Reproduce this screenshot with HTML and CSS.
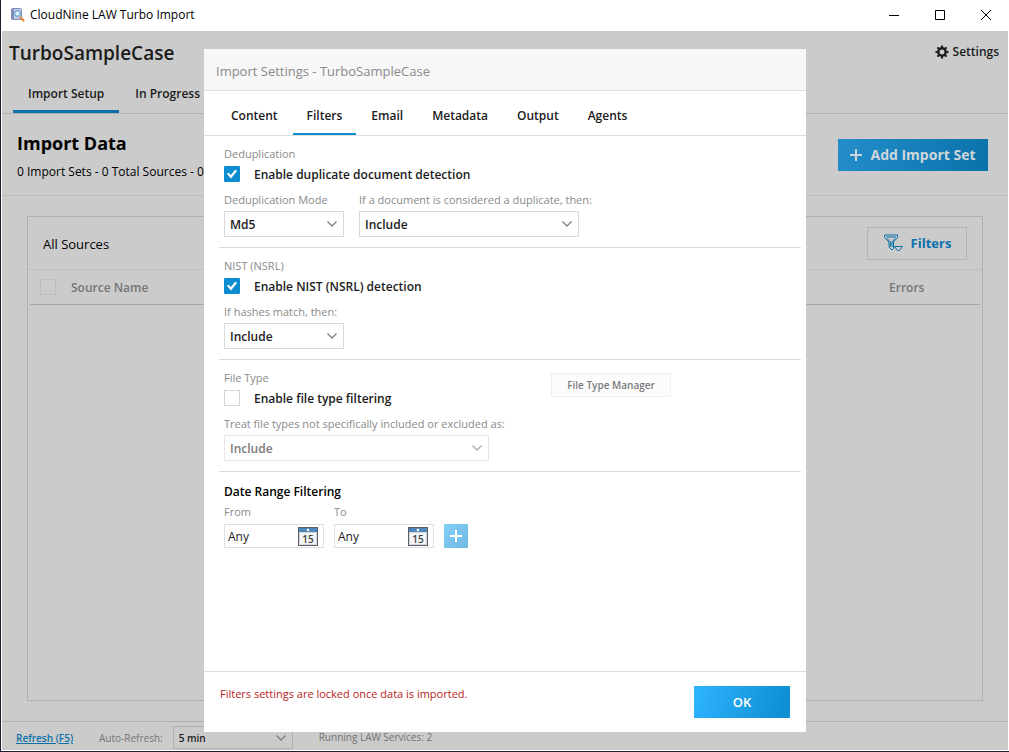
FILE: index.html
```html
<!DOCTYPE html>
<html lang="en">
<head>
<meta charset="utf-8">
<title>CloudNine LAW Turbo Import</title>
<link rel="stylesheet" href="styles.css">
</head>
<body>
<div class="window">
  <header class="titlebar">
    <svg class="app-icon" viewBox="0 0 14 14" aria-hidden="true">
      <rect x="0.5" y="0.5" width="10" height="11" rx="1" fill="#c3cbe6" stroke="#7f8cb8"/>
      <rect x="1" y="1" width="2" height="10" fill="#7f8dbd"/>
      <circle cx="6.500" cy="5.500" r="2.800" fill="#d9f1fd" stroke="#4a93bd" stroke-width="1"/>
      <path d="M9.500 9.500l3 3" stroke="#e08a3c" stroke-width="2.200" stroke-linecap="round"/>
    </svg>
    <span class="app-name">CloudNine LAW Turbo Import</span>
    <div class="window-buttons">
      <button class="window-button" aria-label="Minimize"><svg viewBox="0 0 12 12"><path d="M1 6.500h10"/></svg></button>
      <button class="window-button" aria-label="Maximize"><svg viewBox="0 0 12 12"><path d="M1.500 1.500h9v9h-9z"/></svg></button>
      <button class="window-button" aria-label="Close"><svg viewBox="0 0 12 12"><path d="M1 1l10 10M11 1L1 11"/></svg></button>
    </div>
  </header>

  <div class="workspace">
    <div class="case-header">
      <div class="case-top">
        <h1 class="case-name">TurboSampleCase</h1>
        <button class="settings">
          <svg viewBox="0 0 14 14" aria-hidden="true">
            <circle cx="7" cy="7" r="3.700" fill="none" stroke="currentColor" stroke-width="2.400"/>
            <path d="M7 0.500v2M7 11.500v2M0.500 7h2M11.500 7h2M2.400 2.400l1.400 1.400M10.200 10.200l1.400 1.400M11.600 2.400l-1.400 1.400M3.800 10.200l-1.400 1.400" stroke="currentColor" stroke-width="2"/>
          </svg>
          Settings
        </button>
      </div>
      <nav class="tabs">
        <button class="tab tab-active">Import Setup</button>
        <button class="tab">In Progress</button>
      </nav>
    </div>

    <div class="import-bar">
      <div>
        <h2 class="import-title">Import Data</h2>
        <p class="import-counts">0 Import Sets - 0 Total Sources - 0.00 KB</p>
      </div>
      <button class="add-set">
        <svg viewBox="0 0 12 12" aria-hidden="true"><path d="M6 0v12M0 6h12"/></svg>
        Add Import Set
      </button>
    </div>

    <main class="content">
      <section class="sources">
        <div class="sources-bar">
          <h3 class="sources-title">All Sources</h3>
          <button class="filters">
            <svg viewBox="0 0 20 18" aria-hidden="true">
              <path d="M1.500 1h13v2.500L10.500 8v6.500L9 16l-3-3V8L1.500 3.500zM3 3h10M4 4.500l3.500 3.500v4.500M12 4.500L9 8v5"/>
              <path d="M11.500 12.500h8l-3 4h-2z"/>
            </svg>
            Filters
          </button>
        </div>
        <table class="source-table">
          <thead>
            <tr>
              <th class="col-check"><input class="check check-muted" type="checkbox" aria-label="Select all sources"></th>
              <th class="col-name">Source Name</th>
              <th class="col-errors">Errors</th>
            </tr>
          </thead>
        </table>
      </section>
    </main>

    <footer class="statusbar">
      <a class="refresh" href="#">Refresh (F5)</a>
      <label class="auto-label" for="auto-refresh">Auto-Refresh:</label>
      <div class="picker picker-status">
        <select id="auto-refresh"><option>5 min</option></select>
        <svg class="chevron" viewBox="0 0 10 6" aria-hidden="true"><path d="M0.500 0.500L5 5l4.500-4.500"/></svg>
      </div>
      <span class="services">Running LAW Services: 2</span>
    </footer>

    <div class="overlay">
      <div class="dialog" role="dialog" aria-labelledby="dialog-title">
        <h2 class="dialog-title" id="dialog-title">Import Settings - TurboSampleCase</h2>
        <nav class="dialog-tabs">
          <button class="dialog-tab">Content</button>
          <button class="dialog-tab dialog-tab-active">Filters</button>
          <button class="dialog-tab">Email</button>
          <button class="dialog-tab">Metadata</button>
          <button class="dialog-tab">Output</button>
          <button class="dialog-tab">Agents</button>
        </nav>

        <div class="dialog-body">
          <section class="group">
            <div class="caption">Deduplication</div>
            <label class="option"><input class="check" type="checkbox" checked><span class="option-text">Enable duplicate document detection</span></label>
            <div class="fields">
              <div class="field">
                <label class="caption" for="dedupe-mode">Deduplication Mode</label>
                <div class="picker picker-small">
                  <select id="dedupe-mode"><option>Md5</option></select>
                  <svg class="chevron" viewBox="0 0 10 6" aria-hidden="true"><path d="M0.500 0.500L5 5l4.500-4.500"/></svg>
                </div>
              </div>
              <div class="field">
                <label class="caption" for="dedupe-action">If a document is considered a duplicate, then:</label>
                <div class="picker picker-medium">
                  <select id="dedupe-action"><option>Include</option></select>
                  <svg class="chevron" viewBox="0 0 10 6" aria-hidden="true"><path d="M0.500 0.500L5 5l4.500-4.500"/></svg>
                </div>
              </div>
            </div>
          </section>

          <section class="group">
            <div class="caption">NIST (NSRL)</div>
            <label class="option"><input class="check" type="checkbox" checked><span class="option-text">Enable NIST (NSRL) detection</span></label>
            <div class="fields">
              <div class="field">
                <label class="caption" for="nist-action">If hashes match, then:</label>
                <div class="picker picker-small">
                  <select id="nist-action"><option>Include</option></select>
                  <svg class="chevron" viewBox="0 0 10 6" aria-hidden="true"><path d="M0.500 0.500L5 5l4.500-4.500"/></svg>
                </div>
              </div>
            </div>
          </section>

          <section class="group group-split">
            <div class="group-main">
              <div class="caption">File Type</div>
              <label class="option"><input class="check" type="checkbox"><span class="option-text">Enable file type filtering</span></label>
              <div class="fields">
                <div class="field">
                  <label class="caption" for="type-action">Treat file types not specifically included or excluded as:</label>
                  <div class="picker picker-large picker-disabled">
                    <select id="type-action" disabled><option>Include</option></select>
                    <svg class="chevron" viewBox="0 0 10 6" aria-hidden="true"><path d="M0.500 0.500L5 5l4.500-4.500"/></svg>
                  </div>
                </div>
              </div>
            </div>
            <button class="type-manager" disabled>File Type Manager</button>
          </section>

          <section class="group group-dates">
            <h3 class="dates-title">Date Range Filtering</h3>
            <div class="date-row">
              <div class="date-field">
                <label class="caption" for="date-from">From</label>
                <div class="date-box">
                  <input id="date-from" type="text" value="Any">
                  <button class="calendar" aria-label="Pick start date">
                    <svg viewBox="0 0 20 19"><rect x="0.500" y="0.500" width="19" height="18" fill="#d4d7db" stroke="#596069"/><rect x="1" y="1" width="18" height="4" fill="#4f86bb"/><circle cx="10" cy="3" r="1.300" fill="#fff"/><rect x="2" y="6" width="16" height="11" fill="#f4f5f6"/><text x="10" y="16">15</text></svg>
                  </button>
                </div>
              </div>
              <div class="date-field">
                <label class="caption" for="date-to">To</label>
                <div class="date-box">
                  <input id="date-to" type="text" value="Any">
                  <button class="calendar" aria-label="Pick end date">
                    <svg viewBox="0 0 20 19"><rect x="0.500" y="0.500" width="19" height="18" fill="#d4d7db" stroke="#596069"/><rect x="1" y="1" width="18" height="4" fill="#4f86bb"/><circle cx="10" cy="3" r="1.300" fill="#fff"/><rect x="2" y="6" width="16" height="11" fill="#f4f5f6"/><text x="10" y="16">15</text></svg>
                  </button>
                </div>
              </div>
              <button class="add-range" aria-label="Add date range"><svg viewBox="0 0 12 12"><path d="M6 0v12M0 6h12"/></svg></button>
            </div>
          </section>
        </div>

        <div class="dialog-footer">
          <p class="lock-note">Filters settings are locked once data is imported.</p>
          <button class="ok">OK</button>
        </div>
      </div>
    </div>
  </div>
</div>
</body>
</html>
```

FILE: styles.css
```css
* {
  box-sizing: border-box;
}

body {
  margin: 0;
  font-family: "Open Sans", "Noto Sans", sans-serif;
  font-size: 12px;
  line-height: 16px;
  color: #1b1b1b;
}

h1, h2, h3, p {
  margin: 0;
}

button, input, select {
  margin: 0;
  padding: 0;
  border: 0;
  background: none;
  font: inherit;
  color: inherit;
}

svg {
  display: block;
  flex: none;
  fill: none;
}

.window {
  display: flex;
  flex-direction: column;
  min-height: 100vh;
  border: 1px solid #1b2130;
  border-width: 0 0 1px 1px;
  background: #fff;
}

.titlebar {
  display: flex;
  align-items: center;
  height: 31px;
  padding: 0 0 2px 10px;
  color: #000;
}

.app-icon {
  width: 14px;
  height: 14px;
  margin-right: 5px;
}

.window-buttons {
  display: flex;
  margin-left: auto;
}

.window-button {
  display: grid;
  place-items: center;
  width: 46px;
  height: 28px;
}

.window-button svg {
  width: 12px;
  height: 12px;
  stroke: #000;
}

.workspace {
  position: relative;
  display: flex;
  flex: 1;
  flex-direction: column;
  margin: 0 1px 1px;
  background: #cbcbcb;
}

.case-header {
  border-bottom: 1px solid #b0b0b0;
}

.case-top {
  display: flex;
  align-items: center;
  justify-content: space-between;
  padding: 8px 9px 0 7px;
}

.case-name {
  font-size: 19px;
  line-height: 28px;
  font-weight: 550;
}

.settings {
  display: flex;
  align-items: center;
  gap: 4px;
  padding-bottom: 2px;
  font-weight: 550;
}

.settings svg {
  width: 14px;
  height: 14px;
}

.tabs {
  display: flex;
  gap: 1px;
  padding: 8px 11px 0;
}

.tab {
  height: 38px;
  padding: 2px 15px 0;
  border-bottom: 3px solid transparent;
  font-weight: 550;
}

.tab-active {
  border-color: #0b71aa;
}

.import-bar {
  display: flex;
  align-items: center;
  justify-content: space-between;
  height: 82px;
  padding: 0 20px 0 15px;
  border-bottom: 1px solid #bcbcbc;
  color: #000;
}

.import-title {
  font-size: 18px;
  line-height: 26px;
  font-weight: 700;
}

.import-counts {
  margin-top: 8px;
}

.add-set {
  display: flex;
  align-items: center;
  justify-content: center;
  gap: 8px;
  width: 150px;
  height: 32px;
  background: linear-gradient(105deg, #238ecb, #0a72aa);
  color: #cfd6da;
  font-size: 14px;
  font-weight: 700;
}

.add-set svg {
  width: 12px;
  height: 12px;
  stroke: currentColor;
  stroke-width: 2;
}

.content {
  display: flex;
  flex: 1;
  padding: 20px 25px;
}

.sources {
  flex: 1;
  border: 1px solid #b0b0b4;
}

.sources-bar {
  display: flex;
  align-items: center;
  justify-content: space-between;
  height: 53px;
  padding: 0 15px;
  border-bottom: 1px solid #bebebe;
}

.sources-title {
  padding-top: 2px;
  color: #000;
  font-size: 13px;
  font-weight: 400;
}

.filters {
  display: flex;
  align-items: center;
  justify-content: center;
  gap: 8px;
  width: 100px;
  height: 33px;
  border: 1px solid #b3b3b3;
  color: #0b71aa;
  font-size: 13px;
  font-weight: 700;
}

.filters svg {
  width: 20px;
  height: 18px;
  stroke: currentColor;
}

.source-table {
  width: calc(100% - 4px);
  margin: 0 2px;
  border-collapse: collapse;
  border-bottom: 1px solid #a8a8a8;
  color: #757575;
  text-align: left;
}

.source-table th {
  height: 34px;
  padding: 2px 0 0;
  font-weight: 550;
}

.source-table .col-check {
  width: 41px;
  padding: 0 0 0 10px;
}

.col-errors {
  width: 91px;
}

.statusbar {
  display: flex;
  height: 29px;
  padding-left: 14px;
  border-top: 1px solid #b0b0b0;
  color: #757575;
  font-size: 10px;
}

.refresh {
  padding-top: 8px;
  color: #0b71aa;
  font-weight: 550;
}

.auto-label {
  margin: 8px 10px 0 26px;
}

.services {
  margin: 7px 0 0 26px;
}

.overlay {
  position: absolute;
  inset: 0;
  display: flex;
  justify-content: center;
  padding: 18px 0;
}

.dialog {
  display: flex;
  flex-direction: column;
  width: 602px;
  background: #fff;
}

.dialog-title {
  padding: 12px 12px 9px;
  border-bottom: 1px solid #dedede;
  background: #f7f7f7;
  color: #8a8a8a;
  font-size: 13px;
  line-height: 20px;
  font-weight: 400;
}

.dialog-tabs {
  display: flex;
  gap: 1px;
  padding: 0 13px;
  border-bottom: 1px solid #dedede;
}

.dialog-tab {
  height: 44px;
  padding: 8px 14px 0;
  border-bottom: 2px solid transparent;
  font-weight: 550;
}

.dialog-tab-active {
  border-color: #0d8dd0;
}

.dialog-body {
  flex: 1;
  padding: 0 5px 0 15px;
}

.group {
  padding: 10px 5px;
  border-bottom: 1px solid #dcdcdf;
}

.group-split {
  display: flex;
}

.group-main {
  width: 327px;
}

.caption {
  display: block;
  color: #8a8a8a;
  font-size: 11px;
  line-height: 16px;
}

.option {
  display: flex;
  align-items: center;
  gap: 14px;
  height: 24px;
  font-weight: 550;
}

.option-text {
  padding-top: 2px;
}

.check {
  display: grid;
  place-items: center;
  flex: none;
  width: 16px;
  height: 16px;
  border: 1px solid #d5d5d8;
  appearance: none;
}

.check:checked {
  border-color: #0d8dd0;
  border-radius: 1px;
  background: #0d8dd0;
}

.check:checked::before {
  content: "";
  width: 10px;
  height: 9px;
  background: #fff;
  clip-path: polygon(0 50%, 14% 34%, 38% 62%, 84% 0, 100% 16%, 40% 100%);
}

.check-muted {
  border-color: #bdbdbd;
}

.fields {
  display: flex;
  gap: 15px;
  padding-top: 6px;
}

.field {
  white-space: nowrap;
}

.picker {
  display: grid;
  align-items: center;
  height: 26px;
  margin-top: 3px;
  border: 1px solid #d9d9dc;
}

.picker select {
  grid-area: 1 / 1;
  height: 24px;
  padding: 2px 24px 0 5px;
  appearance: none;
  font-weight: 550;
}

.picker select:disabled {
  opacity: 1;
}

.chevron {
  grid-area: 1 / 1;
  justify-self: end;
  width: 10px;
  height: 6px;
  margin-right: 6px;
  overflow: visible;
  stroke: #808080;
  stroke-width: 1.3;
  pointer-events: none;
}

.picker-small {
  width: 120px;
}

.picker-medium {
  width: 220px;
}

.picker-large {
  width: 265px;
}

.picker-disabled {
  border-color: #e6e6e8;
  color: #7b7b7b;
}

.picker-disabled .chevron {
  stroke: #a8a8a8;
}

.picker-status {
  width: 120px;
  height: 23px;
  margin-top: 4px;
  border-color: #b0b0b0;
  color: #1b1b1b;
}

.picker-status select {
  height: 21px;
  padding-top: 0;
}

.type-manager {
  width: 120px;
  height: 24px;
  margin-top: 3px;
  border: 1px solid #efefef;
  background: #fcfcfc;
  color: #7b7b7b;
  font-size: 10px;
  font-weight: 550;
}

.group-dates {
  padding-top: 11px;
  border-bottom: 0;
}

.dates-title {
  color: #000;
  font-size: 12px;
  line-height: 18px;
  font-weight: 550;
}

.date-row {
  display: flex;
  align-items: flex-end;
  gap: 10px;
  padding-top: 3px;
}

.date-box {
  display: flex;
  align-items: center;
  width: 100px;
  height: 24px;
  margin-top: 4px;
  border: 1px solid #e0e0e2;
}

.date-box input {
  flex: 1;
  min-width: 0;
  padding: 2px 0 0 3px;
}

.calendar {
  margin-right: 5px;
}

.calendar svg {
  width: 20px;
  height: 19px;
}

.calendar text {
  fill: #444;
  font-size: 10px;
  font-weight: 600;
  text-anchor: middle;
}

.add-range {
  display: grid;
  place-items: center;
  width: 24px;
  height: 24px;
  background: linear-gradient(135deg, #82cff8, #6fb9e2);
}

.add-range svg {
  width: 12px;
  height: 12px;
  stroke: #fff;
  stroke-width: 2;
}

.dialog-footer {
  display: flex;
  justify-content: space-between;
  height: 61px;
  padding: 14px 16px;
  border-top: 1px solid #dedede;
}

.lock-note {
  color: #b71c1c;
  font-size: 11px;
}

.ok {
  width: 96px;
  height: 32px;
  background: linear-gradient(105deg, #2fb4ff, #0d8dd0);
  color: #fff;
  font-size: 13px;
  font-weight: 600;
}
```
